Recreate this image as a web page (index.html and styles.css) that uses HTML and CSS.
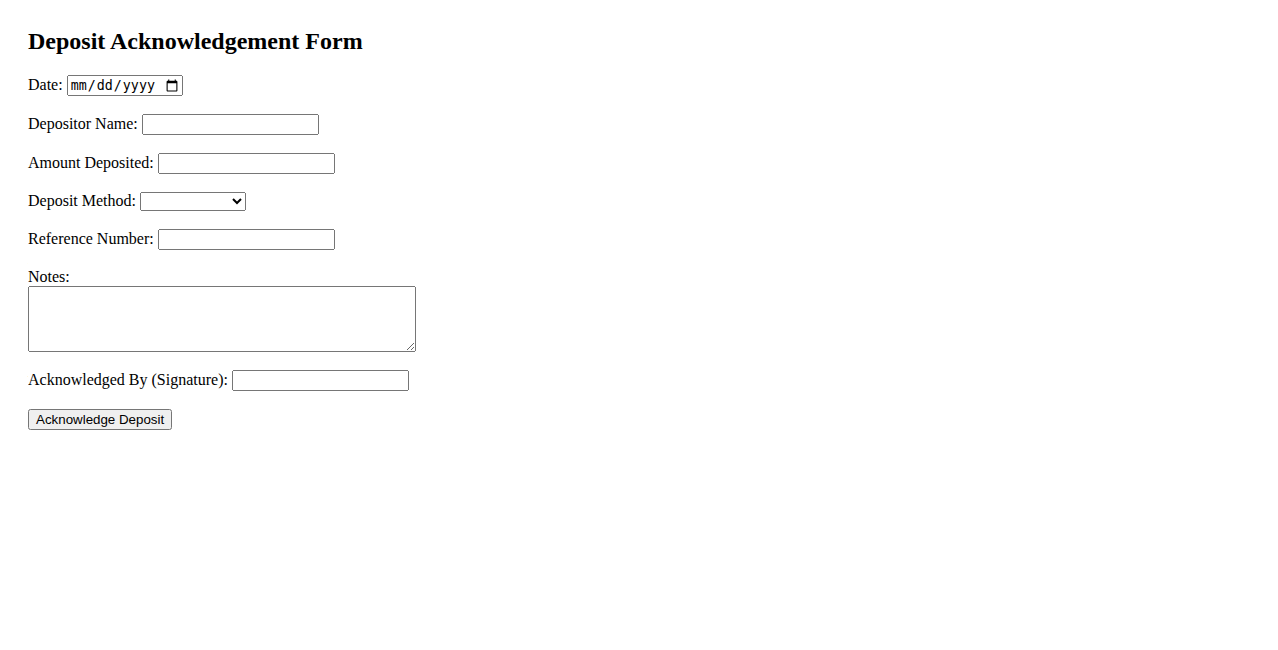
FILE: index.html
```html
<!DOCTYPE html>
<html>
<head>
    <meta charset="UTF-8">
    <title>Deposit Acknowledgement Form</title>
    <link rel="stylesheet" href="styles.css">
</head>
<body>
<h2>Deposit Acknowledgement Form</h2>
<form id="skjema">
    <p class="felt">
        <label for="dato">Date:</label>
        <input type="date" id="dato" class="dato">
    </p>
    <p class="felt">
        <label for="navn">Depositor Name:</label>
        <input type="text" id="navn" class="tekstfelt">
    </p>
    <p class="felt">
        <label for="belop">Amount Deposited:</label>
        <input type="text" id="belop" class="tekstfelt">
    </p>
    <p class="felt">
        <label for="metode">Deposit Method:</label>
        <select id="metode" class="listeStil">
            <option></option>
            <option>Cash</option>
            <option>Check</option>
            <option>Bank Transfer</option>
        </select>
    </p>
    <p class="felt">
        <label for="referanse">Reference Number:</label>
        <input type="text" id="referanse" class="tekstfelt">
    </p>
    <p class="felt">
        <label for="notater">Notes:</label><br>
        <textarea id="notater" class="notater"></textarea>
    </p>
    <p class="felt">
        <label for="signatur">Acknowledged By (Signature):</label>
        <input type="text" id="signatur" class="tekstfelt">
    </p>
    <p class="felt">
        <button type="submit">Acknowledge Deposit</button>
    </p>
</form>
</body>
</html>
```

FILE: styles.css
```css
body{
    font-family: "Liberation Serif", serif;
    padding: 0 20px;
}
.felt{
    margin: 18px 0;
}
.dato{
    width: 116px;
    box-sizing: border-box;
}
.tekstfelt{
    width: 177px;
    box-sizing: border-box;
}
.listeStil{
    width: 106px;
}
.notater{
    width: 388px;
    height: 66px;
    box-sizing: border-box;
    vertical-align: top;
}
```
